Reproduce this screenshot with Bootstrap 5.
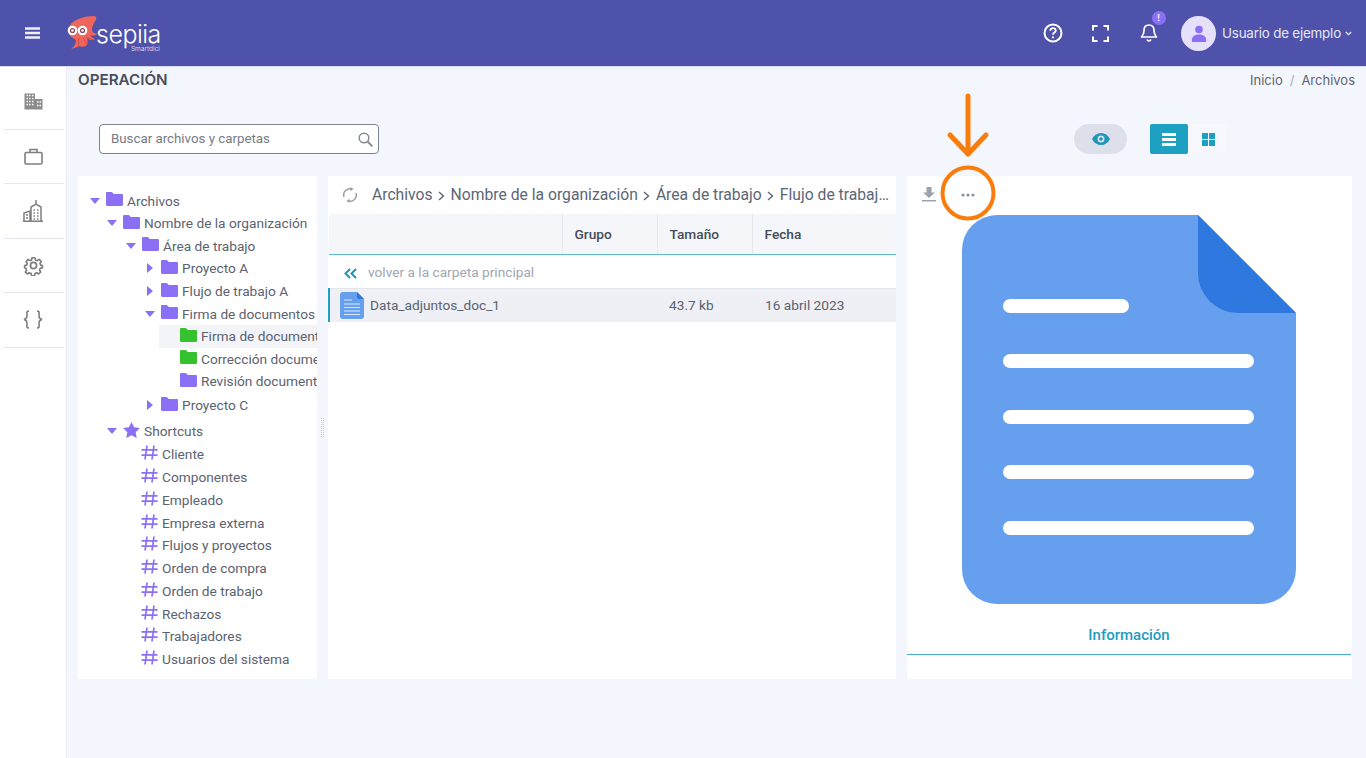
<!DOCTYPE html>
<html lang="es">
<head>
<meta charset="utf-8">
<title>Archivos</title>
<link href="https://cdn.jsdelivr.net/npm/bootstrap@5.3.0/dist/css/bootstrap.min.css" rel="stylesheet">
<style>
html,body{height:100%}
body{background:#f3f6fd;font-family:Roboto,"Liberation Sans",sans-serif;font-size:13.7px;color:#5b6270;overflow:hidden}
.top-bar{height:67px;background:#4f52ab;padding:0 14px 0 25px;border-bottom:1px solid #d8dbee}
.logo-wrap{margin-left:27px}
.brand-text{margin-top:8px;margin-left:-2px}
.brand-word{font-family:Inter,"Liberation Sans",sans-serif;font-size:25px;font-weight:300;color:#fff;line-height:23px;letter-spacing:-.5px;display:block}
.brand-sub{font-family:Inter,"Liberation Sans",sans-serif;font-size:6.5px;color:#d5d6ee;text-align:right;line-height:6px;display:block;padding-right:1px}
.top-ic{width:48px}
.bell-dot{position:absolute;top:-12px;right:7px;width:14px;height:14px;border-radius:50%;background:#8b6ff5;color:#fff;font-size:9px;line-height:14px;text-align:center;font-weight:700}
.avatar{width:35px;height:35px;border-radius:50%;background:#e7e0fb;margin-left:8.5px}
.user-name{font-family:Inter,"Liberation Sans",sans-serif;font-size:13.4px;color:#e6e7f6;letter-spacing:-.2px;margin-left:6px}
.side{width:67px;background:#fff;padding:4px 4px 0;flex:none;height:691px;border-right:1px solid #e9ecf7}
.side-item{height:54.5px;border-bottom:1px solid #e6e7ec;width:60px;padding-right:2px}
.work{padding:0 14px 0 11px;flex:1;min-width:0;position:relative}
.pg-title{font-family:Inter,"Liberation Sans",sans-serif;font-size:15.2px;font-weight:600;color:#484f5c;line-height:20px;margin:0}
.crumbs{font-family:Inter,"Liberation Sans",sans-serif;font-size:13px;color:#5f6570;margin-right:-3px;padding-top:1px}
.crumbs i{font-style:normal;color:#a9adb7;padding:0 7px}
.title-row{height:38px;padding-top:3px}
.tool-row{height:30px;margin:19px 0 22px;padding-left:21px}
.search-box{width:280px;height:30px;border:1px solid #7d8490;border-radius:4px;background:#fff;padding:0 5px 0 11px;color:#767b84;font-size:13.3px}
.eye-pill{width:53px;height:30px;border-radius:15px;background:#dde0ea;margin-right:23px}
.view-on{width:38px;height:30px;background:#1ea0c3;border-radius:2px}
.view-off{width:39px;height:30px;background:#f6f8fd;margin-right:125px;padding-left:2px}
.panes{height:503px}
.pane{background:#fff;height:100%;overflow:hidden;min-width:0}
.pane-tree{width:239px;padding-top:13.4px}
.pane-list{width:568px}
.pane-view{width:445px;flex:none}
.gutter{width:11px;flex:none}
.gutter span{display:block;width:3px;height:19px;border-left:1px dotted #c5cad8;border-right:1px dotted #c5cad8}
.tree-row{height:22.6px;white-space:nowrap;line-height:22px}
.tree-row svg{flex:none}
.tree-row .cr{width:10px;margin-right:6px;text-align:center;display:flex;justify-content:center}
.l0{padding-left:12px}.l1{padding-left:29px}.l2{padding-left:48px}.l3{padding-left:67px}
.tree-row .fd{margin-right:4px;margin-top:-3px}
.sel-row{background:#f3f4f8;margin-left:81px;padding-left:21px!important}
.gap-y{margin-top:1px}
.gap-z{margin-top:3.4px}
.hash{padding-left:63px;height:22.75px}
.hash:nth-child(12){margin-top:.6px}
.hash svg{margin-right:4px;margin-top:-3px}
.trail{height:38px;padding:0 7px 0 14px;font-size:15.7px;color:#5c6675;white-space:nowrap}
.trail svg.chev{margin:0 5.5px}
.trail-text{overflow:hidden;text-overflow:ellipsis;margin-left:14px}
.file-table{table-layout:fixed;width:100%;margin:0;font-size:13.7px;color:#5b6270;--bs-table-bg:transparent;--bs-table-border-color:#e3e5ec}
.file-table th{height:40px;background:#f5f6fa;font-weight:500;color:#454c58;padding:2px 12px 0;vertical-align:middle;border-bottom:1px solid #5bb9d3;border-left:1px solid #e6e8ee}
.file-table th:first-child{border-left:0}
.file-table td{padding:0;vertical-align:middle;border:0}
.back-row td{height:34px;color:#a0a6b3;padding:2px 0 0 15px;border-bottom:1px solid #e3e5ec}
.back-ic{margin-right:11px}
.file-row td{height:34px;background:#eef0f5;padding-left:12px}
.file-row td:first-child{border-left:2px solid #1ea0c3;padding-left:10px}
.file-row td:last-child{padding-left:13px}
.doc-ic{margin-right:6px}
.view-tools{height:39px;padding:0 0 2px 15px;gap:25px}
.big-doc{display:block;margin-left:55px}
.tab-info{height:35px;margin-top:16px;border-bottom:1px solid #42aecb;color:#1f9dbf;font-size:15px;font-weight:500;text-align:center;line-height:30px;margin-right:1px}
.callout{position:absolute;left:870px;top:25px;pointer-events:none}
</style>
</head>
<body>
<svg width="0" height="0" class="position-absolute">
<symbol id="fold" viewBox="0 0 17 14"><path d="M0 1.2C0 .5.5 0 1.200 0h4.600l2 2h8c.7 0 1.200.5 1.200 1.200v9.600c0 .7-.5 1.200-1.200 1.200H1.200C.5 14 0 13.500 0 12.800z"/></symbol>
<symbol id="down" viewBox="0 0 10 6"><path d="M0 0h10L5 6z" fill="#8b6ff5"/></symbol>
<symbol id="right" viewBox="0 0 6 10"><path d="M0 0l6 5-6 5z" fill="#8b6ff5"/></symbol>
<symbol id="hs" viewBox="0 0 17 15"><path d="M6 .5L4 14.500M13 .5l-2 14M.5 4.800h16M.5 10.200h16" fill="none" stroke="#8b6ff5" stroke-width="1.700"/></symbol>
<symbol id="chv" viewBox="0 0 7 10"><path d="M1 1l4.500 4L1 9" fill="none" stroke="#5c6675" stroke-width="1.400"/></symbol>
</svg>

<nav class="navbar top-bar d-flex align-items-center flex-nowrap">
  <svg width="15" height="12" viewBox="0 0 15 12"><path d="M0 1.500h15M0 6h15M0 10.500h15" stroke="#eef" stroke-width="2.400" stroke-linecap="round"/></svg>
  <div class="d-flex align-items-center logo-wrap me-auto">
    <svg width="31" height="34" viewBox="0 0 31 34">
      <path d="M27 0c4 1 2 4 0 7-2 4-3 8 0 10l3 1c-2 2-5 2-7 1 1 2 3 3 5 4-2 2-6 1-8-1 1 3 1 6-1 8-2 1-5 1-7 0-3 2-6 2-8 3 3-2 5-5 5-9C3 21 0 17 2 11 5 4 16 0 27 0z" fill="#f0655b"/>
      <path d="M12 22l-1 10M16 22l5 7M19 21l7 3" stroke="#c9473f" stroke-width=".8" fill="none"/>
      <circle cx="5.500" cy="14.500" r="4.800" fill="#fff"/><circle cx="15.500" cy="14.500" r="4.800" fill="#fff"/>
      <circle cx="5.500" cy="14.500" r="2.600" fill="#8f4a55"/><circle cx="15.500" cy="14.500" r="2.600" fill="#8f4a55"/>
      <circle cx="5.500" cy="14.500" r="1.300" fill="#fff"/><circle cx="15.500" cy="14.500" r="1.300" fill="#fff"/>
    </svg>
    <div class="brand-text">
      <span class="brand-word">sepiia</span>
      <span class="brand-sub">Smartdici</span>
    </div>
  </div>
  <div class="d-flex align-items-center">
    <div class="top-ic d-flex justify-content-center"><svg width="20" height="20" viewBox="0 0 20 20"><circle cx="10" cy="10" r="8.500" fill="none" stroke="#fff" stroke-width="2"/><path d="M7.300 7.800c0-3.400 5.500-3.400 5.500-.2 0 2-2.800 2-2.800 4.100" fill="none" stroke="#fff" stroke-width="1.800"/><circle cx="10" cy="14.300" r="1.100" fill="#fff"/></svg></div>
    <div class="top-ic d-flex justify-content-center"><svg width="17" height="17" viewBox="0 0 17 17"><path d="M1 5.500V1h4.500M11.500 1H16v4.500M16 11.500V16h-4.500M5.500 16H1v-4.500" fill="none" stroke="#fff" stroke-width="2"/></svg></div>
    <div class="top-ic d-flex justify-content-center position-relative"><svg width="18" height="20" viewBox="0 0 18 20"><path d="M9 2c-3.500 0-5 2.500-5 5.500 0 3-1 5-2.500 6.500h15C15 12.500 14 10.500 14 7.500 14 4.500 12.500 2 9 2z" fill="none" stroke="#fff" stroke-width="1.700" stroke-linejoin="round"/><path d="M7 16.500c.5 1.800 3.500 1.800 4 0" fill="none" stroke="#fff" stroke-width="1.600"/></svg><span class="bell-dot">!</span></div>
    <div class="avatar d-flex align-items-center justify-content-center"><svg width="16" height="17" viewBox="0 0 16 17"><circle cx="8" cy="4.500" r="3.800" fill="#8b6ff5"/><path d="M1 17c-1-5 2-7.500 7-7.500s8 2.500 7 7.500z" fill="#8b6ff5"/></svg></div>
    <span class="user-name">Usuario de ejemplo</span>
    <svg width="7" height="5" viewBox="0 0 7 5" class="ms-1"><path d="M.8 1l2.700 2.700L6.200 1" fill="none" stroke="#e6e7f6" stroke-width="1.300"/></svg>
  </div>
</nav>

<div class="d-flex">
  <aside class="side d-flex flex-column">
    <div class="side-item d-flex align-items-center justify-content-center mt-1"><svg width="19" height="17" viewBox="0 0 19 17"><path d="M.5.500h10.500v16H.5zM11 6h7.500v10.500H11z" fill="#8b8b8b"/><path d="M2.500 2.500h1.500M5 2.500h1.500M8 2.500h1.500M2.500 5.500h1.500M5 5.500h1.500M8 5.500h1.500M2.500 8.500h1.500M5 8.500h1.500M8 8.500h1.500M2.500 11.500h1.500M5 11.500h1.500M8 11.500h1.500M13 9h1.500M15.500 9H17M13 12.500h1.500M15.500 12.500H17" stroke="#fff" stroke-width="1.400"/></svg></div>
    <div class="side-item d-flex align-items-center justify-content-center"><svg width="19" height="17" viewBox="0 0 19 17"><rect x="1" y="4.500" width="17" height="11.500" rx="1.300" fill="none" stroke="#7f7f7f" stroke-width="1.600"/><path d="M6 4.500V1.500h7v3" fill="none" stroke="#7f7f7f" stroke-width="1.600"/></svg></div>
    <div class="side-item d-flex align-items-center justify-content-center"><svg width="21" height="22" viewBox="0 0 21 22"><path d="M1 21v-8l6-2v10M8 21V7l5-3 5 3v14M13 4V0" fill="none" stroke="#7f7f7f" stroke-width="1.500"/><path d="M10.500 10h1.500M14 10h1.500M10.500 13h1.500M14 13h1.500M10.500 16h1.500M14 16h1.500M10.500 19h1.500M14 19h1.500M3 15h2M3 18h2M0 21.200h20" stroke="#7f7f7f" stroke-width="1.400"/></svg></div>
    <div class="side-item d-flex align-items-center justify-content-center"><svg width="21" height="21" viewBox="0 0 24 24"><circle cx="12" cy="12" r="3.500" fill="none" stroke="#7f7f7f" stroke-width="2"/><path d="M10 2h4l.6 3 2.400 1 2.600-1.700 2.800 2.800L20.700 9.700l1 2.300 2.300.6v3l-3 .6-1 2.400 1.700 2.500-2.800 2.800-2.600-1.700-2.300 1-.6 3h-4l-.6-3-2.400-1-2.500 1.700-2.900-2.800 1.700-2.500-1-2.400L0 15.600v-3l2.700-.6 1-2.300L2 7.100l2.800-2.800L7.300 6l2.200-1z" transform="translate(1.800 1.400) scale(.85)" fill="none" stroke="#7f7f7f" stroke-width="2.200" stroke-linejoin="round"/></svg></div>
    <div class="side-item d-flex align-items-center justify-content-center"><svg width="20" height="21" viewBox="0 0 20 19"><path d="M6 1C3 1 4 3 4 6c0 2-1 3-3 3.500C3 10 4 11 4 13c0 3-1 5 2 5M14 1c3 0 2 2 2 5 0 2 1 3 3 3.500-2 .5-3 1.500-3 3.500 0 3 1 5-2 5" fill="none" stroke="#7f7f7f" stroke-width="1.600"/></svg></div>
  </aside>

  <main class="work">
    <div class="title-row d-flex justify-content-between align-items-start">
      <h1 class="pg-title">OPERACIÓN</h1>
      <div class="crumbs">Inicio<i>/</i>Archivos</div>
    </div>
    <div class="tool-row d-flex align-items-center">
      <div class="search-box d-flex align-items-center justify-content-between me-auto">
        <span>Buscar archivos y carpetas</span>
        <svg width="15" height="15" viewBox="0 0 15 15"><circle cx="6" cy="6" r="4.800" fill="none" stroke="#858a94" stroke-width="1.500"/><path d="M9.500 9.500l5 5" stroke="#858a94" stroke-width="1.800"/></svg>
      </div>
      <div class="eye-pill d-flex align-items-center justify-content-center"><svg width="18" height="12" viewBox="0 0 18 12"><path d="M0 6c4-8 14-8 18 0-4 8-14 8-18 0z" fill="#1e96b8"/><circle cx="9" cy="6" r="3.500" fill="#dde0ea"/><circle cx="9" cy="6" r="1.800" fill="#1e96b8"/></svg></div>
      <div class="view-on d-flex align-items-center justify-content-center"><svg width="14" height="13" viewBox="0 0 14 13"><path d="M0 0h14v3H0zM0 5h14v3H0zM0 10h14v3H0z" fill="#fff"/></svg></div>
      <div class="view-off d-flex align-items-center justify-content-center"><svg width="13" height="13" viewBox="0 0 13 13"><path d="M0 0h6v6H0zM7 0h6v6H7zM0 7h6v6H0zM7 7h6v6H7z" fill="#1ea0c3"/></svg></div>
    </div>

    <div class="panes d-flex">
      <section class="pane pane-tree">
        <div class="tree-row l0 d-flex align-items-center"><span class="cr"><svg width="10" height="6"><use href="#down"/></svg></span><svg class="fd" width="17" height="14" fill="#8b6ff5"><use href="#fold"/></svg>Archivos</div>
        <div class="tree-row l1 d-flex align-items-center"><span class="cr"><svg width="10" height="6"><use href="#down"/></svg></span><svg class="fd" width="17" height="14" fill="#8b6ff5"><use href="#fold"/></svg>Nombre de la organización</div>
        <div class="tree-row l2 d-flex align-items-center"><span class="cr"><svg width="10" height="6"><use href="#down"/></svg></span><svg class="fd" width="17" height="14" fill="#8b6ff5"><use href="#fold"/></svg>Área de trabajo</div>
        <div class="tree-row l3 d-flex align-items-center"><span class="cr"><svg width="6" height="10"><use href="#right"/></svg></span><svg class="fd" width="17" height="14" fill="#8b6ff5"><use href="#fold"/></svg>Proyecto A</div>
        <div class="tree-row l3 d-flex align-items-center"><span class="cr"><svg width="6" height="10"><use href="#right"/></svg></span><svg class="fd" width="17" height="14" fill="#8b6ff5"><use href="#fold"/></svg>Flujo de trabajo A</div>
        <div class="tree-row l3 d-flex align-items-center"><span class="cr"><svg width="10" height="6"><use href="#down"/></svg></span><svg class="fd" width="17" height="14" fill="#8b6ff5"><use href="#fold"/></svg>Firma de documentos</div>
        <div class="tree-row sel-row d-flex align-items-center"><svg class="fd" width="17" height="14" fill="#36c22f"><use href="#fold"/></svg>Firma de documentos</div>
        <div class="tree-row sel-row bg-white d-flex align-items-center"><svg class="fd" width="17" height="14" fill="#36c22f"><use href="#fold"/></svg>Corrección documentos</div>
        <div class="tree-row sel-row bg-white d-flex align-items-center"><svg class="fd" width="17" height="14" fill="#8b6ff5"><use href="#fold"/></svg>Revisión documentos</div>
        <div class="tree-row l3 gap-y d-flex align-items-center"><span class="cr"><svg width="6" height="10"><use href="#right"/></svg></span><svg class="fd" width="17" height="14" fill="#8b6ff5"><use href="#fold"/></svg>Proyecto C</div>
        <div class="tree-row l1 gap-z d-flex align-items-center"><span class="cr"><svg width="10" height="6"><use href="#down"/></svg></span><svg class="fd" width="17" height="16" viewBox="0 0 24 23" fill="#8b6ff5"><path d="M12 0l3.700 7.700 8.300 1.100-6 5.900 1.500 8.300L12 19l-7.500 4L6 14.700 0 8.800l8.300-1.100z"/></svg>Shortcuts</div>
        <div class="tree-row hash d-flex align-items-center"><svg width="17" height="15"><use href="#hs"/></svg>Cliente</div>
        <div class="tree-row hash d-flex align-items-center"><svg width="17" height="15"><use href="#hs"/></svg>Componentes</div>
        <div class="tree-row hash d-flex align-items-center"><svg width="17" height="15"><use href="#hs"/></svg>Empleado</div>
        <div class="tree-row hash d-flex align-items-center"><svg width="17" height="15"><use href="#hs"/></svg>Empresa externa</div>
        <div class="tree-row hash d-flex align-items-center"><svg width="17" height="15"><use href="#hs"/></svg>Flujos y proyectos</div>
        <div class="tree-row hash d-flex align-items-center"><svg width="17" height="15"><use href="#hs"/></svg>Orden de compra</div>
        <div class="tree-row hash d-flex align-items-center"><svg width="17" height="15"><use href="#hs"/></svg>Orden de trabajo</div>
        <div class="tree-row hash d-flex align-items-center"><svg width="17" height="15"><use href="#hs"/></svg>Rechazos</div>
        <div class="tree-row hash d-flex align-items-center"><svg width="17" height="15"><use href="#hs"/></svg>Trabajadores</div>
        <div class="tree-row hash d-flex align-items-center"><svg width="17" height="15"><use href="#hs"/></svg>Usuarios del sistema</div>
      </section>
      <div class="gutter d-flex align-items-center justify-content-center"><span></span></div>
      <section class="pane pane-list">
        <div class="trail d-flex align-items-center">
          <svg width="16" height="16" viewBox="0 0 16 16" class="flex-shrink-0"><path d="M2 10C.5 5 5 .5 10 2M14 6c1.500 5-3 9.500-8 8" fill="none" stroke="#9aa0a8" stroke-width="1.500"/><path d="M8.500 0l3 2-3 2.200zM7.500 16l-3-2 3-2.200z" fill="#9aa0a8"/></svg>
          <div class="trail-text">Archivos<svg class="chev" width="7" height="10"><use href="#chv"/></svg>Nombre de la organización<svg class="chev" width="7" height="10"><use href="#chv"/></svg>Área de trabajo<svg class="chev" width="7" height="10"><use href="#chv"/></svg>Flujo de trabajo A</div>
        </div>
        <table class="table file-table">
          <colgroup><col style="width:233px"><col style="width:95px"><col style="width:95px"><col></colgroup>
          <thead><tr><th></th><th>Grupo</th><th>Tamaño</th><th>Fecha</th></tr></thead>
          <tbody>
            <tr class="back-row"><td colspan="4"><svg width="13" height="11" viewBox="0 0 13 11" class="back-ic"><path d="M6 1L1.500 5.500 6 10M12 1L7.500 5.500 12 10" fill="none" stroke="#1e96b8" stroke-width="2"/></svg><span>volver a la carpeta principal</span></td></tr>
            <tr class="file-row"><td><div class="d-flex align-items-center"><svg width="24" height="27" viewBox="0 0 24 27" class="doc-ic flex-shrink-0"><path d="M3 0h14l7 7v17a3 3 0 0 1-3 3H3a3 3 0 0 1-3-3V3a3 3 0 0 1 3-3z" fill="#669fee"/><path d="M17 0l7 7h-5a2 2 0 0 1-2-2z" fill="#2f78e0"/><path d="M4 8h8M4 12h16M4 15.500h16M4 19h16M4 22.500h16" stroke="#dbe8fb" stroke-width="1.200"/></svg>Data_adjuntos_doc_1</div></td><td></td><td>43.7 kb</td><td>16 abril 2023</td></tr>
          </tbody>
        </table>
      </section>
      <div class="gutter"></div>
      <section class="pane pane-view">
        <div class="view-tools d-flex align-items-center">
          <svg width="14" height="15" viewBox="0 0 14 15"><path d="M4.500 0h5v5.500H13L7 11 1 5.500h3.500zM0 13h14v1.600H0z" fill="#9aa3b2"/></svg>
          <svg width="14" height="4" viewBox="0 0 14 4"><circle cx="2" cy="2" r="1.600" fill="#8b93a5"/><circle cx="7" cy="2" r="1.600" fill="#8b93a5"/><circle cx="12" cy="2" r="1.600" fill="#8b93a5"/></svg>
        </div>
        <svg class="big-doc" width="334" height="389" viewBox="0 0 334 389">
          <path d="M35 0H236L334 98V354a35 35 0 0 1-35 35H35a35 35 0 0 1-35-35V35A35 35 0 0 1 35 0z" fill="#669fee"/>
          <path d="M236 0L334 98H276a40 40 0 0 1-40-40z" fill="#2f78e0"/>
          <g fill="#fff"><rect x="41" y="84" width="126" height="14" rx="7"/><rect x="41" y="139" width="251" height="14" rx="7"/><rect x="41" y="195" width="251" height="14" rx="7"/><rect x="41" y="250" width="251" height="14" rx="7"/><rect x="41" y="306" width="251" height="14" rx="7"/></g>
        </svg>
        <div class="tab-info">Información</div>
      </section>
    </div>
    <svg class="callout" width="60" height="130" viewBox="0 0 60 130">
      <path d="M31 4V62M13 43L31 62 49 43" fill="none" stroke="#f97d0c" stroke-width="5" stroke-linecap="round" stroke-linejoin="round"/>
      <circle cx="31" cy="101" r="25.500" fill="none" stroke="#f97d0c" stroke-width="4"/>
    </svg>
  </main>
</div>
<script src="https://cdn.jsdelivr.net/npm/bootstrap@5.3.0/dist/js/bootstrap.bundle.min.js"></script>
</body>
</html>
